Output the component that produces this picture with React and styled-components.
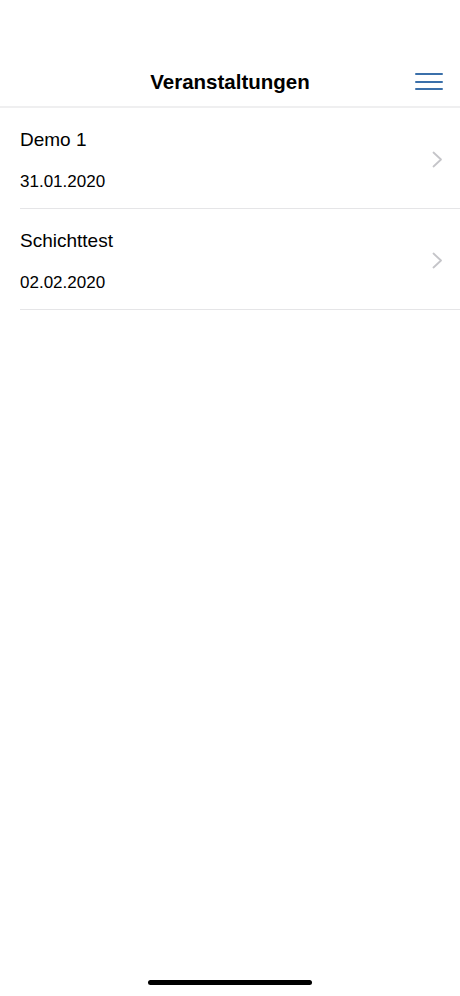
import styled, { createGlobalStyle } from 'styled-components'

const GlobalStyle = createGlobalStyle`
    html, body {
        margin: 0;
        padding: 0;
        background: #ffffff;
    }
    body {
        font-family: "Liberation Sans", Arial, sans-serif;
        color: #000;
    }
`

const events = [
    { name: 'Demo 1', date: '31.01.2020' },
    { name: 'Schichttest', date: '02.02.2020' },
]

function App() {
    return (
        <Screen>
            <GlobalStyle />
            <NavBar>
                <NavSide />
                <NavTitle>Veranstaltungen</NavTitle>
                <NavSide>
                    <MenuButton aria-label="Menü">
                        <MenuLine />
                        <MenuLine />
                        <MenuLine />
                    </MenuButton>
                </NavSide>
            </NavBar>
            <List>
                {events.map((ev) => (
                    <Row key={ev.name}>
                        <RowText>
                            <RowTitle>{ev.name}</RowTitle>
                            <RowDate>{ev.date}</RowDate>
                        </RowText>
                        <Chevron viewBox="0 0 11 17" width="11" height="17">
                            <path d="M1.5 1.5 L9 8.5 L1.5 15.5" fill="none" stroke="#c5c5c9" strokeWidth="1.8" strokeLinecap="round" strokeLinejoin="round" />
                        </Chevron>
                    </Row>
                ))}
            </List>
            <HomeBar>
                <HomeIndicator />
            </HomeBar>
        </Screen>
    )
}

export default App

const Screen = styled.div`
    width: 460px;
    height: 996px;
    display: flex;
    flex-direction: column;
    background: #ffffff;
    overflow: hidden;
`

const NavBar = styled.header`
    height: 108px;
    box-sizing: border-box;
    padding: 0 17px 12px 17px;
    display: flex;
    align-items: flex-end;
    justify-content: space-between;
    border-bottom: 2px solid #efeff0;
`

const NavSide = styled.div`
    width: 60px;
    display: flex;
    justify-content: flex-end;
`

const NavTitle = styled.h1`
    margin: 0;
    font-size: 20.5px;
    font-weight: 700;
    line-height: 24px;
    color: #000;
`

const MenuButton = styled.button`
    border: none;
    background: none;
    padding: 0;
    width: 28px;
    display: flex;
    flex-direction: column;
    gap: 5.5px;
    margin-bottom: 4px;
`

const MenuLine = styled.span`
    display: block;
    height: 2px;
    width: 28px;
    background: #3b70aa;
    border-radius: 1px;
`

const List = styled.div`
    display: flex;
    flex-direction: column;
    padding-left: 20px;
`

const Row = styled.div`
    display: flex;
    align-items: center;
    padding: 21px 17px 16px 0;
    border-bottom: 1px solid #e5e5e7;
`

const RowText = styled.div`
    flex: 1;
    display: flex;
    flex-direction: column;
    gap: 21px;
`

const RowTitle = styled.div`
    font-size: 19px;
    line-height: 22px;
`

const RowDate = styled.div`
    font-size: 17px;
    line-height: 20px;
`

const Chevron = styled.svg`
    display: block;
    margin-top: -3px;
`

const HomeBar = styled.div`
    margin-top: auto;
    height: 16px;
    display: flex;
    justify-content: center;
`

const HomeIndicator = styled.div`
    width: 164px;
    height: 5px;
    border-radius: 3px;
    background: #000;
`
